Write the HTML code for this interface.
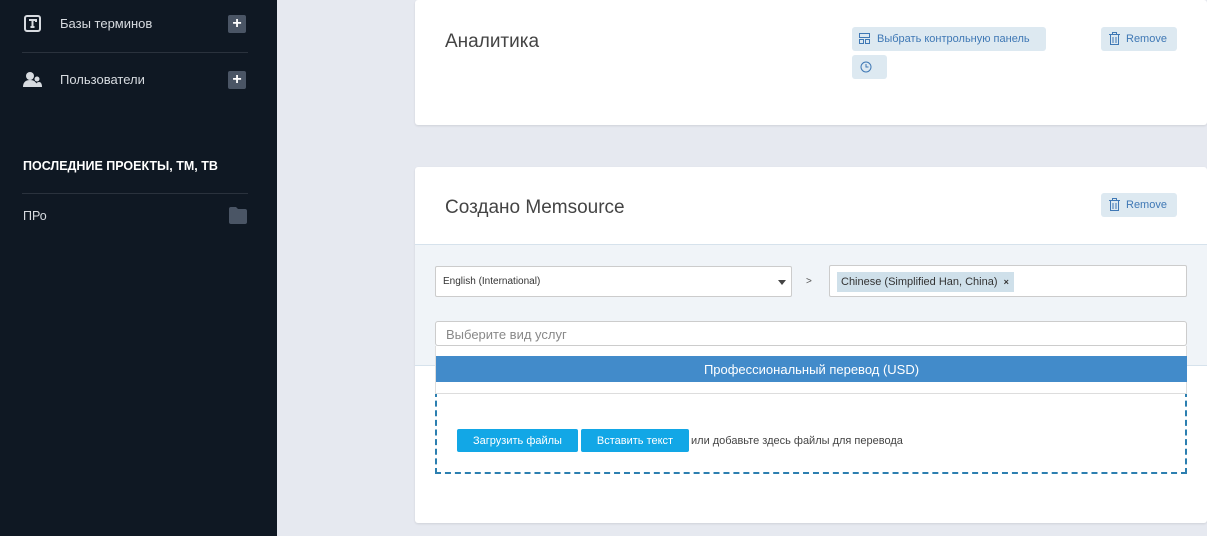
<!DOCTYPE html><html><head><meta charset="utf-8"><style>
*{box-sizing:border-box;margin:0;padding:0}
body{width:1207px;height:536px;overflow:hidden;background:#e6e9f0;font-family:"Liberation Sans",sans-serif;position:relative}
.sb{position:absolute;left:0;top:0;width:277px;height:536px;background:#0f1823;color:#d7dbe0}
.abs{position:absolute}
.plus{position:absolute;width:18px;height:18px;background:#4a5565;border-radius:2px;color:#fff;font-weight:bold;font-size:16px;line-height:18px;text-align:center}
.hr{position:absolute;left:22px;width:226px;height:1px;background:#2a323d}
.card{position:absolute;left:415px;width:792px;background:#fff;border-radius:3px;box-shadow:0 1px 2px rgba(0,0,0,.1)}
.btn{position:absolute;background:#dde9f1;border-radius:3px;color:#3f78b5;font-size:11px;line-height:25px;height:24px}
.h{position:absolute;font-size:19px;color:#444}
</style></head><body>
<div class="sb">
<svg class="abs" style="left:24px;top:15px" width="17" height="17"><rect x="1" y="1" width="15" height="15" rx="2" fill="none" stroke="#d7dbe0" stroke-width="2"/><path d="M5 5h7v2M8.5 5v7M6.5 12h4" stroke="#d7dbe0" stroke-width="2" fill="none"/></svg>
<div class="abs" style="left:60px;top:16px;font-size:13px">Базы терминов</div>
<div class="plus" style="left:228px;top:15px">+</div>
<div class="hr" style="top:52px"></div>
<svg class="abs" style="left:23px;top:71px" width="19" height="17"><circle cx="7" cy="5" r="4" fill="#d7dbe0"/><path d="M0 16c0-5 3-7 7-7s7 2 7 7z" fill="#d7dbe0"/><circle cx="14" cy="8" r="2.5" fill="#d7dbe0"/><path d="M12 16c0-3 2-5 4-5s3 2 3 5z" fill="#d7dbe0"/></svg>
<div class="abs" style="left:60px;top:72px;font-size:13px">Пользователи</div>
<div class="plus" style="left:228px;top:71px">+</div>
<div class="abs" style="left:23px;top:159px;font-size:12.5px;font-weight:bold;color:#fff">ПОСЛЕДНИЕ ПРОЕКТЫ, ТМ, ТВ</div>
<div class="hr" style="top:193px"></div>
<div class="abs" style="left:23px;top:209px;font-size:12.5px">ПРо</div>
<svg class="abs" style="left:229px;top:207px" width="18" height="17"><path d="M0 2q0-2 2-2h5l2 2h7q2 0 2 2v11q0 2-2 2H2q-2 0-2-2z" fill="#4a5565"/></svg>
</div>
<div class="card" style="top:0;height:125px">
<div class="h" style="left:30px;top:31px">Аналитика</div>
<div class="btn" style="left:437px;top:27px;width:194px;padding-left:25px">Выбрать контрольную панель
<svg class="abs" style="left:7px;top:6px" width="11" height="11"><path d="M.5.5h10v4H.5zM.5 6.5h4v4h-4zM6.5 6.5h4v4h-4z" fill="none" stroke="#3f78b5"/></svg></div>
<div class="btn" style="left:437px;top:55px;width:35px"><svg class="abs" style="left:8px;top:6px" width="12" height="12"><circle cx="6" cy="6" r="5" fill="none" stroke="#3f78b5"/><path d="M6 3v3h2.5" fill="none" stroke="#3f78b5"/></svg></div>
<div class="btn" style="left:686px;top:27px;width:76px;padding-left:25px">Remove
<svg class="abs" style="left:8px;top:5px" width="11" height="13"><path d="M0 2.5h11M3.5 2.5V.5h4v2M1.5 2.5v10h8v-10M4 5v6M7 5v6" fill="none" stroke="#3f78b5"/></svg></div>
</div>
<div class="card" style="top:167px;height:356px">
<div class="h" style="left:30px;top:30px">Создано Memsource</div>
<div class="btn" style="left:686px;top:26px;width:76px;padding-left:25px">Remove
<svg class="abs" style="left:8px;top:5px" width="11" height="13"><path d="M0 2.5h11M3.5 2.5V.5h4v2M1.5 2.5v10h8v-10M4 5v6M7 5v6" fill="none" stroke="#3f78b5"/></svg></div>
<div class="abs" style="left:0;top:77px;width:792px;height:122px;background:#f0f4f8;border-top:1px solid #d6e2ec;border-bottom:1px solid #d6e2ec"></div>
<div class="abs" style="left:20px;top:99px;width:357px;height:31px;background:#fff;border:1px solid #ccc;border-radius:2px;font-size:10px;line-height:30px;padding-left:7px;color:#333">English (International)
<div class="abs" style="right:5px;top:13px;border:4px solid transparent;border-top:5px solid #444"></div></div>
<div class="abs" style="left:391px;top:109px;font-size:10px;color:#555">&gt;</div>
<div class="abs" style="left:414px;top:98px;width:358px;height:32px;background:#fff;border:1px solid #ccc;border-radius:2px">
<div class="abs" style="left:7px;top:6px;height:20px;background:#cfe0ea;font-size:11px;line-height:20px;padding:0 5px 0 4px;color:#333">Chinese (Simplified Han, China) &nbsp;<b style="font-size:9px">×</b></div></div>
<div class="abs" style="left:20px;top:154px;width:752px;height:25px;background:#fff;border:1px solid #ccc;border-radius:3px;font-size:13px;line-height:25px;padding-left:10px;color:#888">Выберите вид услуг</div>
<div class="abs" style="left:20px;top:224px;width:752px;height:83px;border:2px dashed #2c7fb0"></div>
<div class="abs" style="left:20px;top:179px;width:752px;height:48px;background:#fff;border:1px solid #ddd;border-top:none">
<div class="abs" style="left:0;top:10px;width:751px;height:26px;background:#428bca;color:#fff;font-size:13px;text-align:center;line-height:27px">Профессиональный перевод (USD)</div></div>
<div class="abs" style="left:42px;top:262px;width:121px;height:23px;background:#12a7e6;color:#fff;font-size:11px;line-height:25px;text-align:center;border-radius:2px">Загрузить файлы</div>
<div class="abs" style="left:166px;top:262px;width:108px;height:23px;background:#12a7e6;color:#fff;font-size:11px;line-height:25px;text-align:center;border-radius:2px">Вставить текст</div>
<div class="abs" style="left:276px;top:268px;font-size:11px;color:#444">или добавьте здесь файлы для перевода</div>
</div>
</body></html>
